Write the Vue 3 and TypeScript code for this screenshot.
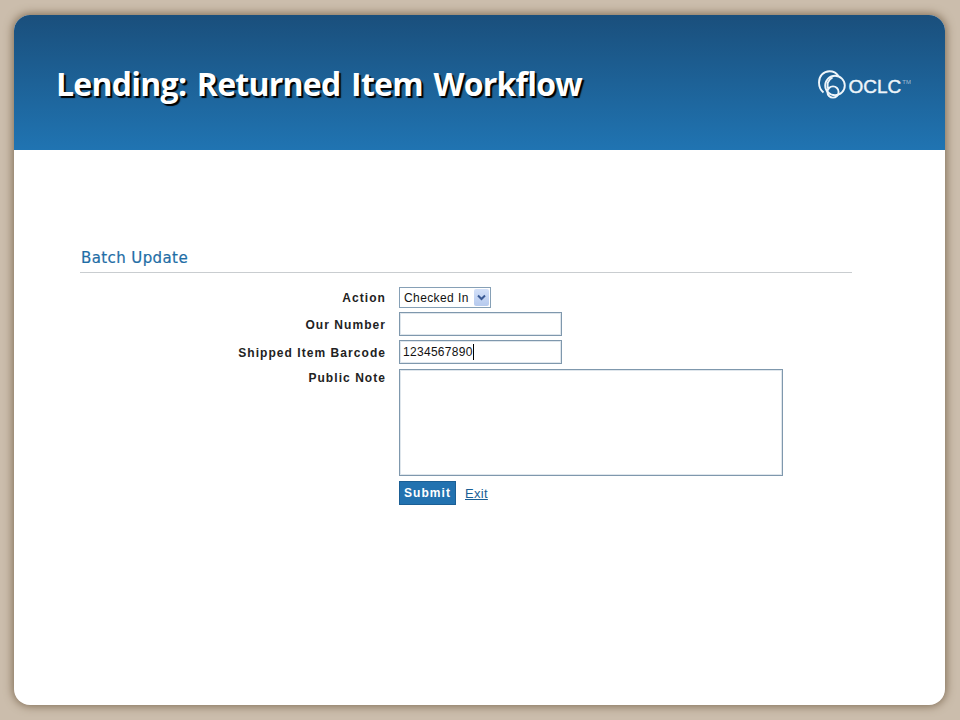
<script setup lang="ts">
const title: string = 'Lending: Returned Item Workflow'
const barcode: string = '1234567890'
</script>

<template>
  <div class="page">
    <div class="card">
      <header class="banner">
        <h1 class="title">{{ title }}</h1>
        <div class="logo">
          <svg class="mark" width="28" height="29" viewBox="0 0 28 29" fill="none" stroke="#eef5fa" stroke-width="1.9">
            <path d="M5.5 22.5C2.5 20 1 16.5 1 12.5C1 6 5.5 1.2 11.5 1.2C15.5 1.2 18.5 3 20.5 6" />
            <circle cx="17" cy="15.5" r="9.8" />
            <path d="M10.5 19.5C8.5 14.5 10 10 14.5 7.5" />
            <circle cx="15" cy="22" r="5.6" />
          </svg>
          <span class="word">OCLC</span>
          <span class="tm">TM</span>
        </div>
      </header>
      <main class="content">
        <h2 class="heading">Batch Update</h2>
        <form class="form" @submit.prevent>
          <label class="label label-action">Action</label>
          <div class="select-wrap">
            <select class="select">
              <option>Checked In</option>
            </select>
            <span class="arrow">
              <svg width="9" height="7" viewBox="0 0 9 7" fill="none" stroke="#3a5a94" stroke-width="2">
                <path d="M1 1.5L4.5 5L8 1.5" />
              </svg>
            </span>
          </div>
          <label class="label">Our Number</label>
          <input class="input" type="text" />
          <label class="label">Shipped Item Barcode</label>
          <div class="input-wrap">
            <input class="input" type="text" :value="barcode" />
            <span class="caret"></span>
          </div>
          <label class="label label-note">Public Note</label>
          <textarea class="note"></textarea>
          <span></span>
          <div class="actions">
            <button class="submit" type="submit">Submit</button>
            <a class="exit" href="#">Exit</a>
          </div>
        </form>
      </main>
    </div>
  </div>
</template>

<style>
html, body { margin: 0; background: #cbbdac; }
</style>

<style scoped>
.page {
  width: 960px;
  height: 720px;
  box-sizing: border-box;
  padding: 15px 15px 15px 14px;
  background: #cbbdac;
  overflow: hidden;
}
.card {
  height: 690px;
  background: #fff;
  border-radius: 16px;
  overflow: hidden;
  box-shadow: 0 0 10px 1px #7d6a52;
}
.banner {
  height: 135px;
  box-sizing: border-box;
  padding: 0 34px 0 42px;
  display: flex;
  align-items: center;
  justify-content: space-between;
  background: linear-gradient(#1a4f7c, #2074b2);
}
.title {
  margin: 4px 0 0;
  font: bold 32px/1.2 "Open Sans", "Noto Sans", sans-serif;
  letter-spacing: -0.75px;
  word-spacing: 3px;
  color: #fff;
  text-shadow: 2px 2px 1px #000;
}
.logo {
  display: flex;
  align-items: center;
  color: #eef5fa;
  margin-top: 4px;
}
.mark { margin-right: 3px; }
.word {
  font: 19px/1 "Liberation Sans", sans-serif;
  -webkit-text-stroke: 0.4px #eef5fa;
  margin-top: 3px;
}
.tm {
  font: 6px/1 "Liberation Sans", sans-serif;
  align-self: flex-start;
  margin: 9px 0 0 1px;
  opacity: 0.6;
}
.content {
  padding: 97px 93px 0 66px;
}
.heading {
  margin: 0;
  padding-bottom: 3px;
  border-bottom: 1px solid #c9cdd0;
  font: 15px/22px "DejaVu Sans", sans-serif;
  letter-spacing: 0.4px;
  text-indent: 1px;
  color: #1f6ea6;
  -webkit-text-stroke: 0.2px #1f6ea6;
}
.form {
  display: grid;
  grid-template-columns: 306px 1fr;
  column-gap: 13px;
  row-gap: 4px;
  margin-top: 14px;
  font: 12px "Liberation Sans", sans-serif;
}
.label {
  text-align: right;
  font: bold 12px/26px "Liberation Sans", sans-serif;
  letter-spacing: 1.05px;
  color: #222;
  height: 24px;
}
.label-action { line-height: 22px; height: 21px; }
.label-note { line-height: 21px; }
.select-wrap {
  position: relative;
  width: 92px;
  height: 21px;
}
.select {
  appearance: none;
  width: 100%;
  height: 100%;
  margin: 0;
  padding: 0 0 0 4px;
  border: 1px solid #86a0b6;
  border-radius: 0;
  background: #fff;
  font: 12px "Liberation Sans", sans-serif;
  letter-spacing: 0.4px;
  color: #111;
}
.arrow {
  position: absolute;
  top: 2px;
  right: 2px;
  width: 15px;
  height: 17px;
  display: flex;
  align-items: center;
  justify-content: center;
  background: linear-gradient(#d3e0f8, #b6caee);
  border-radius: 2px;
}
.input-wrap {
  position: relative;
  height: 24px;
}
.input {
  display: block;
  width: 163px;
  height: 24px;
  box-sizing: border-box;
  margin: 0;
  padding: 0 3px;
  border: 1px solid #7f98ad;
  box-shadow: inset 0 0 0 1px #dfe6ec;
  border-radius: 0;
  outline: none;
  background: #fff;
  font: 12px "Liberation Sans", sans-serif;
  letter-spacing: 0.3px;
  color: #111;
}
.caret {
  position: absolute;
  left: 74px;
  top: 4px;
  width: 1px;
  height: 16px;
  background: #000;
}
.note {
  display: block;
  width: 384px;
  height: 107px;
  box-sizing: border-box;
  margin: 1px 0 0;
  padding: 3px;
  border: 1px solid #7f98ad;
  box-shadow: inset 0 0 0 1px #dfe6ec;
  border-radius: 0;
  outline: none;
  resize: none;
  background: #fff;
}
.actions {
  display: flex;
  align-items: center;
  gap: 9px;
  margin-top: 1px;
}
.submit {
  width: 57px;
  height: 24px;
  padding: 0;
  border: 1px solid #1b5f95;
  border-radius: 0;
  background: #2272b0;
  color: #fff;
  font: bold 12px "Liberation Sans", sans-serif;
  letter-spacing: 1.05px;
}
.exit {
  color: #1a5f95;
  font: 13px/14px "Liberation Sans", sans-serif;
  letter-spacing: 0.3px;
  text-decoration: underline;
  margin-top: 2px;
}
</style>
